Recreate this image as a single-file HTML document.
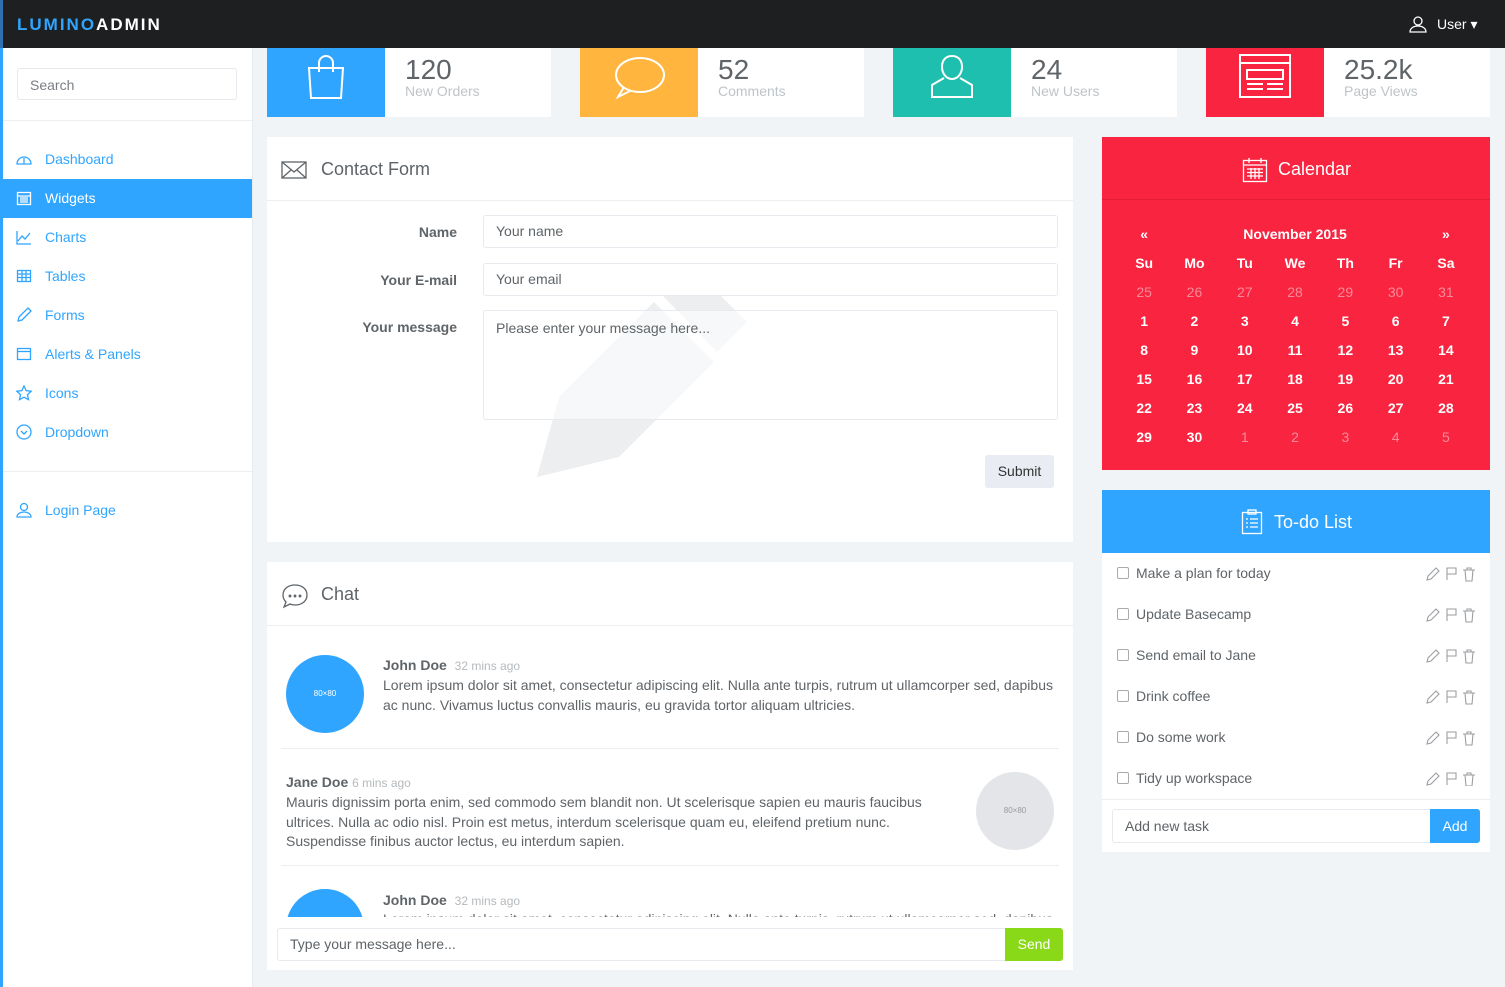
<!DOCTYPE html>
<html><head><meta charset="utf-8"><style>
*{box-sizing:border-box;margin:0;padding:0}
body{width:1505px;height:987px;overflow:hidden;background:#f1f4f7;font-family:"Liberation Sans",sans-serif;color:#5f6468;position:relative;font-size:14px}
.a{position:absolute}
.hdr{left:0;top:0;width:1505px;height:48px;background:#1e1f21;border-left:3px solid #2f6fb0}
.side{left:0;top:48px;width:253px;height:939px;background:#fff;border-right:1px solid #e6e9ed;border-left:3px solid #30a5ff}
.nav{left:3px;width:249px;height:39px;color:#30a5ff;font-size:14px;line-height:39px;padding-left:42px}
.nav svg{position:absolute;left:13px;top:11px}
.card{background:#fff}
.stat{top:48px;height:69px;width:284px;background:#fff}
.stat .ic{position:absolute;left:0;top:0;width:118px;height:69px}
.stat .n{position:absolute;left:138px;top:6px;font-size:28px;color:#5f6468}
.stat .l{position:absolute;left:138px;top:35px;font-size:14px;color:#bfc4c8}
.ph{font-size:18px;color:#5f6468}
.lbl{font-weight:bold;color:#5f6468;font-size:14px;text-align:right;width:190px}
.inp{border:1px solid #e6e9ed;border-radius:3px;background:#fff;font-size:14px;color:#5f6468;padding-left:12px}
.cal td{width:50.3px;text-align:center;height:29px;color:#fff;font-size:14px;font-weight:bold}
.cal td.o{color:#f78a9a;font-weight:normal}
.todo{left:1117px;font-size:14px;color:#5f6468}
.todo .cb{position:absolute;left:0;top:2px;width:12px;height:12px;border:1px solid #aaa;border-radius:2px}
.todo span{position:absolute;left:19px;top:0;white-space:nowrap}
.ti{left:1427px}
</style></head><body>
<div class="a hdr"><div class="a" style="left:14px;top:15px;font-size:17px;font-weight:bold;letter-spacing:2px;color:#30a5ff">LUMINO<span style="color:#fff">ADMIN</span></div>
<div class="a" style="left:1406px;top:15px;color:#fff;font-size:14px"><svg width="18" height="18" viewBox="0 0 18 18" style="vertical-align:-4px;margin-right:10px" fill="none" stroke="#fff" stroke-width="1.3"><circle cx="9" cy="6" r="4"/><path d="M1 17c0-4 4-6 8-6s8 2 8 6z"/></svg>User ▾</div></div>
<div class="a side"></div>
<div class="a inp" style="left:17px;top:68px;width:220px;height:32px;line-height:32px;color:#7a7f84">Search</div>
<div class="a" style="left:3px;top:120px;width:249px;border-top:1px solid #eee"></div>
<div class="a nav" style="top:140px"><svg width="16" height="16" fill="none" stroke="#30a5ff" stroke-width="1.3"><path d="M1 13a7 7 0 0 1 14 0z"/><path d="M8 13V7"/></svg>Dashboard</div>
<div class="a nav" style="top:179px;background:#30a5ff;color:#fff"><svg width="16" height="16" fill="none" stroke="#fff" stroke-width="1.3"><rect x="1.5" y="2.5" width="13" height="12"/><path d="M1.5 6h13M4 8h8M4 10h8M4 12h8"/></svg>Widgets</div>
<div class="a nav" style="top:218px"><svg width="16" height="16" fill="none" stroke="#30a5ff" stroke-width="1.3"><path d="M1 2v13h14M2 12l4-5 3 3 5-6"/></svg>Charts</div>
<div class="a nav" style="top:257px"><svg width="16" height="16" fill="none" stroke="#30a5ff" stroke-width="1.3"><rect x="1.5" y="2.5" width="13" height="11"/><path d="M1.5 6h13M1.5 9.5h13M6 2.5v11M10 2.5v11"/></svg>Tables</div>
<div class="a nav" style="top:296px"><svg width="16" height="16" fill="none" stroke="#30a5ff" stroke-width="1.3"><path d="M2 14l1-4 9-9 3 3-9 9z"/></svg>Forms</div>
<div class="a nav" style="top:335px"><svg width="16" height="16" fill="none" stroke="#30a5ff" stroke-width="1.3"><rect x="1.5" y="2.5" width="13" height="11"/><path d="M1.5 5.5h13"/></svg>Alerts &amp; Panels</div>
<div class="a nav" style="top:374px"><svg width="16" height="16" fill="none" stroke="#30a5ff" stroke-width="1.3"><path d="M8 1l2.2 4.6 5 .6-3.7 3.4 1 5L8 12.2 3.5 14.6l1-5L.8 6.2l5-.6z"/></svg>Icons</div>
<div class="a nav" style="top:413px"><svg width="16" height="16" fill="none" stroke="#30a5ff" stroke-width="1.3"><circle cx="8" cy="8" r="7"/><path d="M5 7l3 3 3-3"/></svg>Dropdown</div>
<div class="a" style="left:3px;top:471px;width:249px;border-top:1px solid #eee"></div>
<div class="a nav" style="top:491px"><svg width="16" height="16" fill="none" stroke="#30a5ff" stroke-width="1.3"><circle cx="8" cy="5" r="3.5"/><path d="M1 15c0-3 3-5 7-5s7 2 7 5z"/></svg>Login Page</div>

<div class="a stat" style="left:267px"><div class="ic" style="background:#30a5ff"><svg class="a" style="left:39px;top:6px" width="40" height="46" fill="none" stroke="#fff" stroke-width="2"><path d="M3 14h34l-2 30H5z"/><path d="M13 18V9a7 7 0 0 1 14 0v9"/></svg></div><div class="n">120</div><div class="l">New Orders</div></div>
<div class="a stat" style="left:580px"><div class="ic" style="background:#ffb53e"><svg class="a" style="left:34px;top:8px" width="52" height="44" fill="none" stroke="#fff" stroke-width="2"><ellipse cx="26" cy="19" rx="24" ry="17"/><path d="M10 31l-6 10 12-6"/></svg></div><div class="n">52</div><div class="l">Comments</div></div>
<div class="a stat" style="left:893px"><div class="ic" style="background:#1ebfae"><svg class="a" style="left:36px;top:6px" width="46" height="46" fill="none" stroke="#fff" stroke-width="2"><path d="M23 2c-7 0-10 5-10 11s4 12 10 12 10-6 10-12-3-11-10-11zM15 24l-12 7v12h40V31l-12-7"/></svg></div><div class="n">24</div><div class="l">New Users</div></div>
<div class="a stat" style="left:1206px"><div class="ic" style="background:#f9243f"><svg class="a" style="left:33px;top:6px" width="52" height="44" fill="none" stroke="#fff" stroke-width="2"><rect x="1" y="1" width="50" height="42"/><path d="M1 9h50M8 16h36v9H8zM8 30h16M8 35h16M28 30h16M28 35h16"/></svg></div><div class="n">25.2k</div><div class="l">Page Views</div></div>

<div class="a card" style="left:267px;top:137px;width:806px;height:405px">
<div class="a" style="left:0;top:0;width:806px;height:64px;border-bottom:1px solid #eee"></div>
<svg class="a" style="left:14px;top:24px" width="26" height="18" fill="none" stroke="#5f6468" stroke-width="1.3"><rect x="1" y="1" width="24" height="16"/><path d="M1 1l12 10 12-10M1 17l9-8M25 17l-9-8"/></svg>
<div class="a ph" style="left:54px;top:22px">Contact Form</div>
<svg class="a" style="left:270px;top:130px" width="210" height="210" fill="#eceef0"><path d="M0 210l22-80 95-95 60 60-95 95z"/><path d="M125 28l30-28 55 55-30 30z"/></svg>
<div class="a lbl" style="left:0;top:87px">Name</div>
<div class="a lbl" style="left:0;top:135px">Your E-mail</div>
<div class="a lbl" style="left:0;top:182px">Your message</div>
<div class="a inp" style="left:216px;top:78px;width:575px;height:33px;line-height:31px">Your name</div>
<div class="a inp" style="left:216px;top:126px;width:575px;height:33px;line-height:31px">Your email</div>
<div class="a inp" style="left:216px;top:173px;width:575px;height:110px;padding-top:9px;background:rgba(255,255,255,.6)">Please enter your message here...</div>
<div class="a" style="left:718px;top:318px;width:69px;height:33px;background:#e9ecf2;border-radius:3px;color:#333;line-height:33px;text-align:center">Submit</div>
</div>

<div class="a card" style="left:267px;top:562px;width:806px;height:408px;overflow:hidden">
<div class="a" style="left:0;top:0;width:806px;height:64px;border-bottom:1px solid #eee"></div>
<svg class="a" style="left:14px;top:21px" width="28" height="26" fill="none" stroke="#5f6468" stroke-width="1.3"><path d="M14 2C7 2 2 6 2 12c0 3 1 5 3 7l-2 5 6-3c2 1 3 1 5 1 7 0 12-4 12-10S21 2 14 2z"/><circle cx="9" cy="13" r=".8"/><circle cx="14" cy="13" r=".8"/><circle cx="19" cy="13" r=".8"/></svg>
<div class="a ph" style="left:54px;top:22px">Chat</div>
<div class="a" style="left:19px;top:93px;width:78px;height:78px;border-radius:50%;background:#30a5ff;color:#fff;font-size:8px;line-height:78px;text-align:center">80×80</div>
<div class="a" style="left:116px;top:95px;font-weight:bold;color:#5f6468">John Doe <span style="font-weight:normal;color:#b5b9bd;font-size:12px;margin-left:4px">32 mins ago</span></div>
<div class="a" style="left:116px;top:114px;width:680px;line-height:19.5px">Lorem ipsum dolor sit amet, consectetur adipiscing elit. Nulla ante turpis, rutrum ut ullamcorper sed, dapibus ac nunc. Vivamus luctus convallis mauris, eu gravida tortor aliquam ultricies.</div>
<div class="a" style="left:14px;top:186px;width:778px;border-top:1px solid #eee"></div>
<div class="a" style="left:19px;top:212px;font-weight:bold">Jane Doe <span style="font-weight:normal;color:#b5b9bd;font-size:12px">6 mins ago</span></div>
<div class="a" style="left:19px;top:231px;width:640px;line-height:19.5px">Mauris dignissim porta enim, sed commodo sem blandit non. Ut scelerisque sapien eu mauris faucibus ultrices. Nulla ac odio nisl. Proin est metus, interdum scelerisque quam eu, eleifend pretium nunc. Suspendisse finibus auctor lectus, eu interdum sapien.</div>
<div class="a" style="left:709px;top:210px;width:78px;height:78px;border-radius:50%;background:#e3e5e8;color:#999;font-size:8px;line-height:78px;text-align:center">80×80</div>
<div class="a" style="left:14px;top:303px;width:778px;border-top:1px solid #eee"></div>
<div class="a" style="left:19px;top:327px;width:78px;height:78px;border-radius:50%;background:#30a5ff"></div>
<div class="a" style="left:116px;top:330px;font-weight:bold">John Doe <span style="font-weight:normal;color:#b5b9bd;font-size:12px;margin-left:4px">32 mins ago</span></div>
<div class="a" style="left:116px;top:349px;width:680px;white-space:nowrap;overflow:hidden">Lorem ipsum dolor sit amet, consectetur adipiscing elit. Nulla ante turpis, rutrum ut ullamcorper sed, dapibus</div>
<div class="a" style="left:0;top:355px;width:806px;height:53px;background:#fff"></div>
<div class="a inp" style="left:10px;top:366px;width:786px;height:33px;line-height:31px">Type your message here...</div>
<div class="a" style="left:738px;top:366px;width:58px;height:33px;background:#8ad919;color:#fff;line-height:33px;text-align:center;border-radius:0 3px 3px 0">Send</div>
</div>

<div class="a" style="left:1102px;top:137px;width:388px;height:333px;background:#f9243f">
<div class="a" style="left:0;top:0;width:388px;height:63px;border-bottom:1px solid #e41d36"></div>
<svg class="a" style="left:140px;top:20px" width="26" height="26" fill="none" stroke="#fff" stroke-width="1.3"><rect x="1.5" y="3.5" width="23" height="21"/><path d="M1.5 8h23M7 1v5M19 1v5M5 12h16M5 15.5h16M5 19h16M9 11v11M13 11v11M17 11v11"/></svg>
<div class="a" style="left:176px;top:22px;color:#fff;font-size:18px">Calendar</div>
<table class="a cal" style="left:17px;top:82px;border-collapse:collapse">
<tr><td>«</td><td colspan="5">November 2015</td><td>»</td></tr>
<tr><td>Su</td><td>Mo</td><td>Tu</td><td>We</td><td>Th</td><td>Fr</td><td>Sa</td></tr>
<tr><td class="o">25</td><td class="o">26</td><td class="o">27</td><td class="o">28</td><td class="o">29</td><td class="o">30</td><td class="o">31</td></tr>
<tr><td>1</td><td>2</td><td>3</td><td>4</td><td>5</td><td>6</td><td>7</td></tr>
<tr><td>8</td><td>9</td><td>10</td><td>11</td><td>12</td><td>13</td><td>14</td></tr>
<tr><td>15</td><td>16</td><td>17</td><td>18</td><td>19</td><td>20</td><td>21</td></tr>
<tr><td>22</td><td>23</td><td>24</td><td>25</td><td>26</td><td>27</td><td>28</td></tr>
<tr><td>29</td><td>30</td><td class="o">1</td><td class="o">2</td><td class="o">3</td><td class="o">4</td><td class="o">5</td></tr>
</table></div>

<div class="a card" style="left:1102px;top:490px;width:388px;height:362px"></div>
<div class="a" style="left:1102px;top:490px;width:388px;height:63px;background:#30a5ff"></div>
<svg class="a" style="left:1241px;top:509px" width="22" height="26" fill="none" stroke="#fff" stroke-width="1.3"><rect x="1.5" y="3.5" width="19" height="21"/><rect x="7" y="1" width="8" height="4"/><path d="M5 10h2M9 10h8M5 14h2M9 14h8M5 18h2M9 18h8"/></svg>
<div class="a" style="left:1274px;top:512px;color:#fff;font-size:18px">To-do List</div>
<div class="a todo" style="top:565px"><div class="cb"></div><span>Make a plan for today</span></div>
<div class="a todo" style="top:606px"><div class="cb"></div><span>Update Basecamp</span></div>
<div class="a todo" style="top:647px"><div class="cb"></div><span>Send email to Jane</span></div>
<div class="a todo" style="top:688px"><div class="cb"></div><span>Drink coffee</span></div>
<div class="a todo" style="top:729px"><div class="cb"></div><span>Do some work</span></div>
<div class="a todo" style="top:770px"><div class="cb"></div><span>Tidy up workspace</span></div>
<svg class="a" style="left:1426px;top:566px" width="50" height="220" fill="none" stroke="#9a9ea2" stroke-width="1.1">
<g id="r"><path d="M1 14l1-4 8-8 3 3-8 8z"/><path d="M21 14V2h9v6h-9"/><path d="M37 4h12M39 4l1 11h6l1-11M41 4V2h4v2"/></g>
<use href="#r" y="41"/><use href="#r" y="82"/><use href="#r" y="123"/><use href="#r" y="164"/><use href="#r" y="205"/></svg>
<div class="a" style="left:1102px;top:799px;width:388px;border-top:1px solid #eee"></div>
<div class="a inp" style="left:1112px;top:809px;width:368px;height:34px;line-height:32px">Add new task</div>
<div class="a" style="left:1430px;top:809px;width:50px;height:34px;background:#30a5ff;color:#fff;line-height:34px;text-align:center;border-radius:0 3px 3px 0">Add</div>
</body></html>
